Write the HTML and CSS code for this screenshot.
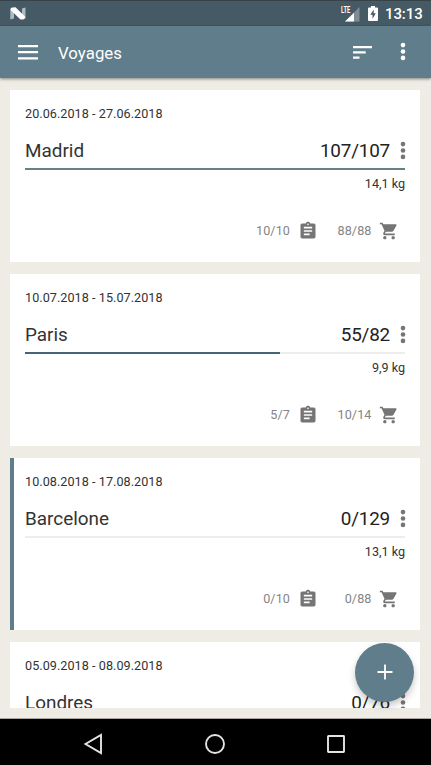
FILE: index.html
```
<!DOCTYPE html>
<html lang="fr">
<head>
<meta charset="utf-8">
<title>Voyages</title>
<link rel="stylesheet" href="styles.css">
</head>
<body>
<svg class="defs" aria-hidden="true">
  <symbol id="more" viewBox="0 0 6 20"><circle cx="3" cy="3.1" r="2.3"/><circle cx="3" cy="9.500" r="2.3"/><circle cx="3" cy="15.900" r="2.3"/></symbol>
  <symbol id="clipboard" viewBox="0 0 24 24"><path d="M19 3h-4.18C14.4 1.84 13.3 1 12 1s-2.4.84-2.82 2H5c-1.1 0-2 .9-2 2v14c0 1.1.9 2 2 2h14c1.1 0 2-.9 2-2V5c0-1.1-.9-2-2-2zm-7 0c.55 0 1 .45 1 1s-.45 1-1 1-1-.45-1-1 .45-1 1-1zm2 14H7v-2h7v2zm3-4H7v-2h10v2zm0-4H7V7h10v2z"/></symbol>
  <symbol id="cart" viewBox="0 0 24 24"><path d="M7 18c-1.1 0-1.99.9-1.99 2S5.9 22 7 22s2-.9 2-2-.9-2-2-2zM1 2v2h2l3.6 7.59-1.35 2.45c-.16.28-.25.61-.25.96 0 1.1.9 2 2 2h12v-2H7.42c-.14 0-.25-.11-.25-.25l.03-.12.9-1.63h7.45c.75 0 1.41-.41 1.75-1.03l3.58-6.49A1.003 1.003 0 0 0 20 4H5.21l-.94-2H1zm16 16c-1.1 0-1.99.9-1.99 2s.89 2 1.99 2 2-.9 2-2-.9-2-2-2z"/></symbol>
</svg>
<div class="screen">
  <header class="status">
    <svg class="logo" viewBox="0 0 16 13"><path fill="#aebbc1" d="M.3 1.500 4 .5v11L.3 12.500zM12 1.500 15.500.5v11l-3.500 1z"/><path fill="#fff" d="M1.200.8 5.500.3l9.700 9.500-1.200 2.400-3.600.3L.6 3z"/></svg>
    <div class="signal">
      <svg viewBox="0 0 16 16"><path fill="#7f8c93" d="M15.500 1v14.500H1z"/><path fill="#fff" d="M10 6.800v8.700H1z"/></svg>
      <span class="lte">LTE</span>
    </div>
    <svg class="battery" viewBox="0 0 10 15"><path fill="#fff" d="M3 0h4v1.500h2q1 0 1 1V14q0 1-1 1H1q-1 0-1-1V2.500q0-1 1-1h2z"/><path fill="#455a64" d="M5.700 3.500 2.300 8.700h2.200v4l3.300-5.400H5.700z"/></svg>
    <span class="time">13:13</span>
  </header>
  <nav class="toolbar">
    <svg class="menu" viewBox="0 0 20 15"><path d="M0 0h20v2.200H0zM0 6.100h20v2.200H0zM0 12.200h20v2.200H0z"/></svg>
    <h1>Voyages</h1>
    <svg class="sort" viewBox="0 0 19 13"><path d="M0 0h19v2.200H0zM0 5.300h12.700v2.200H0zM0 10.500h6.500v2.200H0z"/></svg>
    <svg class="more" viewBox="0 0 6 20"><use href="#more"/></svg>
  </nav>
  <main class="list">
    <article class="card">
      <p class="date">20.06.2018 - 27.06.2018</p>
      <div class="row"><h2>Madrid</h2><span class="count">107/107</span><svg class="dots"><use href="#more"/></svg></div>
      <div class="bar"><div class="fill muted" style="width:100%"></div></div>
      <p class="weight">14,1 kg</p>
      <div class="stats"><span>10/10</span><svg><use href="#clipboard"/></svg><span class="buy">88/88</span><svg><use href="#cart"/></svg></div>
    </article>
    <article class="card">
      <p class="date">10.07.2018 - 15.07.2018</p>
      <div class="row"><h2>Paris</h2><span class="count">55/82</span><svg class="dots"><use href="#more"/></svg></div>
      <div class="bar"><div class="fill" style="width:67.1%"></div></div>
      <p class="weight">9,9 kg</p>
      <div class="stats"><span>5/7</span><svg><use href="#clipboard"/></svg><span class="buy">10/14</span><svg><use href="#cart"/></svg></div>
    </article>
    <article class="card current">
      <p class="date">10.08.2018 - 17.08.2018</p>
      <div class="row"><h2>Barcelone</h2><span class="count">0/129</span><svg class="dots"><use href="#more"/></svg></div>
      <div class="bar"></div>
      <p class="weight">13,1 kg</p>
      <div class="stats"><span>0/10</span><svg><use href="#clipboard"/></svg><span class="buy">0/88</span><svg><use href="#cart"/></svg></div>
    </article>
    <article class="card">
      <p class="date">05.09.2018 - 08.09.2018</p>
      <div class="row"><h2>Londres</h2><span class="count">0/76</span><svg class="dots"><use href="#more"/></svg></div>
    </article>
  </main>
  <button class="fab" aria-label="Ajouter"><svg viewBox="0 0 16 16"><path d="M7.100.5h1.800v6.600h6.600v1.800H8.900v6.600H7.100V8.900H.5V7.100h6.600z"/></svg></button>
  <footer class="navbar">
    <svg viewBox="0 0 20 22"><path d="M18 2v18L2.500 11z"/></svg>
    <svg viewBox="0 0 20 22"><circle cx="10" cy="11" r="9"/></svg>
    <svg viewBox="0 0 20 22"><rect x="2" y="3" width="16" height="16" rx=".5"/></svg>
  </footer>
</div>
</body>
</html>
```
FILE: styles.css
```
* { box-sizing: border-box; margin: 0; padding: 0; }
body { font-family: Roboto, "Liberation Sans", sans-serif; background: #eeece4; overflow: hidden; }
svg { display: block; flex: none; }
.defs { position: absolute; width: 0; height: 0; }
.screen { position: relative; width: 431px; height: 765px; display: flex; flex-direction: column; }

.status {
  height: 26px; flex: none; background: #455a64; border-top: 1px solid #364349;
  display: flex; align-items: center; padding: 0 8px 0 10px;
}
.logo { width: 16px; height: 13px; margin-right: auto; }
.signal { position: relative; width: 19px; height: 16px; margin-right: 8px; padding-left: 3px; }
.signal svg { width: 16px; height: 16px; }
.lte {
  position: absolute; left: 0; top: 0; background: #455a64; color: #fff;
  font: 700 9px/8px Roboto, sans-serif; letter-spacing: -.2px; transform: scaleX(.65); transform-origin: left;
}
.battery { width: 10px; height: 15px; margin-right: 7px; }
.time { width: 38px; color: #fff; font-size: 15px; font-weight: 500; line-height: 26px; letter-spacing: -.1px; white-space: nowrap; padding-top: 1px; }

.toolbar {
  height: 52px; flex: none; background: #607d8b; box-shadow: 0 1px 3px rgba(0,0,0,.45); z-index: 1;
  display: flex; align-items: center; padding: 0 25px 0 18px; fill: #fff;
}
.menu { width: 20px; height: 15px; margin-right: 20px; }
.toolbar h1 { flex: 1; color: #fff; font-size: 16.8px; font-weight: 400; letter-spacing: .05px; padding-top: 2px; }
.sort { width: 19px; height: 13px; margin-right: 28px; }
.more { width: 6px; height: 20px; }

.list { height: 630px; flex: none; overflow: hidden; padding: 12px 11px 0 10px; display: flex; flex-direction: column; gap: 12px; }
.card { height: 172px; flex: none; background: #fff; padding: 16px 15px 0; color: #333; }
.current { border-left: 4px solid #607d8b; padding-left: 11px; }
.date { font-size: 12.6px; line-height: 16px; letter-spacing: .06px; }
.row { height: 32px; margin-top: 13px; display: flex; align-items: center; }
.row h2, .count { font-size: 18.9px; font-weight: 400; line-height: 22px; }
.row h2 { flex: 1; }
.count { color: #222; letter-spacing: -.2px; }
.dots { width: 6px; height: 20px; margin: 0 -1px 0 10px; fill: #757575; }
.bar { height: 2px; margin-top: 1px; background: #ededed; }
.fill { height: 2px; background: #446673; }
.fill.muted { background: #687f89; }
.weight { font-size: 12.6px; line-height: 16px; margin-top: 6px; text-align: right; }
.stats { display: flex; justify-content: flex-end; align-items: center; margin-top: 29px; padding-right: 6px; font-size: 12.6px; letter-spacing: .1px; line-height: 20px; color: #858585; }
.stats svg { width: 20px; height: 20px; margin-left: 7.500px; fill: #757575; }
.stats .buy { width: 54px; text-align: right; }

.fab {
  position: absolute; left: 355px; top: 643px; width: 59px; height: 59px; border: 0; border-radius: 50%;
  background: #607d8b; box-shadow: 0 4px 7px rgba(0,0,0,.22); display: flex; align-items: center; justify-content: center; z-index: 2;
}
.fab svg { width: 16px; height: 16px; margin-top: -1px; fill: #fff; }
.navbar {
  margin-top: auto; height: 46px; background: #000; box-shadow: 0 -1px 0 #aaa8a1;
  display: flex; align-items: center; justify-content: center; gap: 101.500px; padding: 3px 2px 0 0;
  fill: none; stroke: #e4e4e4; stroke-width: 1.900;
}
.navbar svg { width: 20px; height: 22px; }
```
